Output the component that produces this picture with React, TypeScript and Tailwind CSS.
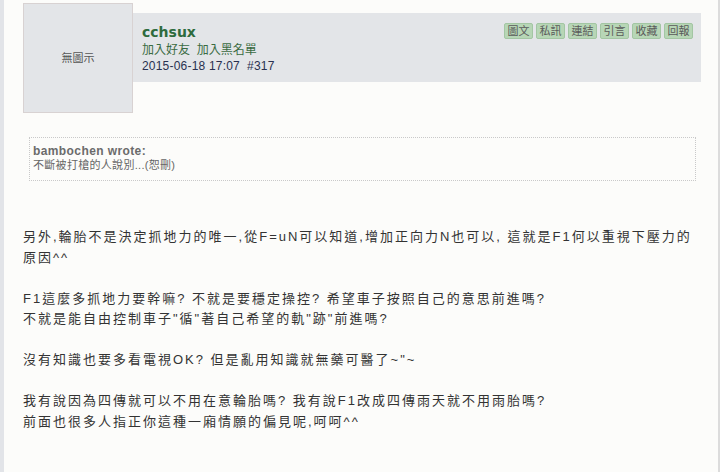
import React from "react";

const FONT = { fontFamily: '"Liberation Sans", Arial, "Noto Sans CJK TC", sans-serif' };

const buttons = ["圖文", "私訊", "連結", "引言", "收藏", "回報"];

export default function App() {
  return (
    <div className="w-[720px] h-[472px] flex bg-[#fcfcfa] overflow-hidden" style={FONT}>
      <div className="w-[4px] h-full bg-[#e2e4e8]" />
      <div className="flex-1 flex flex-col pl-[19px] pr-[17px]">
        <div className="flex items-start">
          <div className="mt-[3px] w-[110px] h-[110px] border border-[#d8d2d2] bg-[#e3e5e8] flex items-center justify-center text-[11px] text-[#555]">
            無圖示
          </div>
          <div className="mt-[13px] flex-1 h-[69px] bg-[#e3e5e8] flex justify-between pl-[9px] pr-[8px]">
            <div className="flex flex-col pt-[10px]">
              <div className="text-[14px] leading-[18px] font-bold text-[#2e6b3d]" style={{ fontFamily: '"DejaVu Sans", Verdana, sans-serif' }}>
                cchsux
              </div>
              <div className="text-[12px] leading-[16px] text-[#3a6b42] mt-[1px]">加入好友&nbsp;&nbsp;加入黑名單</div>
              <div className="text-[12px] leading-[16px] text-[#2a3150] tracking-[0.2px]">2015-06-18 17:07&nbsp;&nbsp;#317</div>
            </div>
            <div className="flex gap-[3px] pt-[10px]">
              {buttons.map((b) => (
                <div
                  key={b}
                  className="w-[29px] h-[16px] rounded-[2px] border border-[#a3c6a3] bg-[#b7d6b6] flex items-center justify-center text-[11px] leading-none text-[#5a5a5a]"
                >
                  {b}
                </div>
              ))}
            </div>
          </div>
        </div>
        <div className="mt-[24px] ml-[6px] mr-[5px] h-[44px] border border-dotted border-[#c9c9c9] px-[3px] pt-[6px]">
          <div className="text-[12px] leading-[14px] font-bold text-[#6b6b6b] tracking-[0.4px]">bambochen wrote:</div>
          <div className="text-[11px] leading-[14px] text-[#666] tracking-[0.3px]">不斷被打槍的人說別...(恕刪)</div>
        </div>
        <div className="mt-[46px] text-[13px] leading-[20.5px] tracking-[2px] text-[#333] whitespace-nowrap">
          <p>另外,輪胎不是決定抓地力的唯一,從F=uN可以知道,增加正向力N也可以, 這就是F1何以重視下壓力的</p>
          <p>原因^^</p>
          <p>&nbsp;</p>
          <p>F1這麼多抓地力要幹嘛? 不就是要穩定操控? 希望車子按照自己的意思前進嗎?</p>
          <p>不就是能自由控制車子"循"著自己希望的軌"跡"前進嗎?</p>
          <p>&nbsp;</p>
          <p>沒有知識也要多看電視OK? 但是亂用知識就無藥可醫了~"~</p>
          <p>&nbsp;</p>
          <p>我有說因為四傳就可以不用在意輪胎嗎? 我有說F1改成四傳雨天就不用雨胎嗎?</p>
          <p>前面也很多人指正你這種一廂情願的偏見呢,呵呵^^</p>
        </div>
      </div>
      <div className="w-[2px] h-full bg-[#dcdcdc]" />
    </div>
  );
}
